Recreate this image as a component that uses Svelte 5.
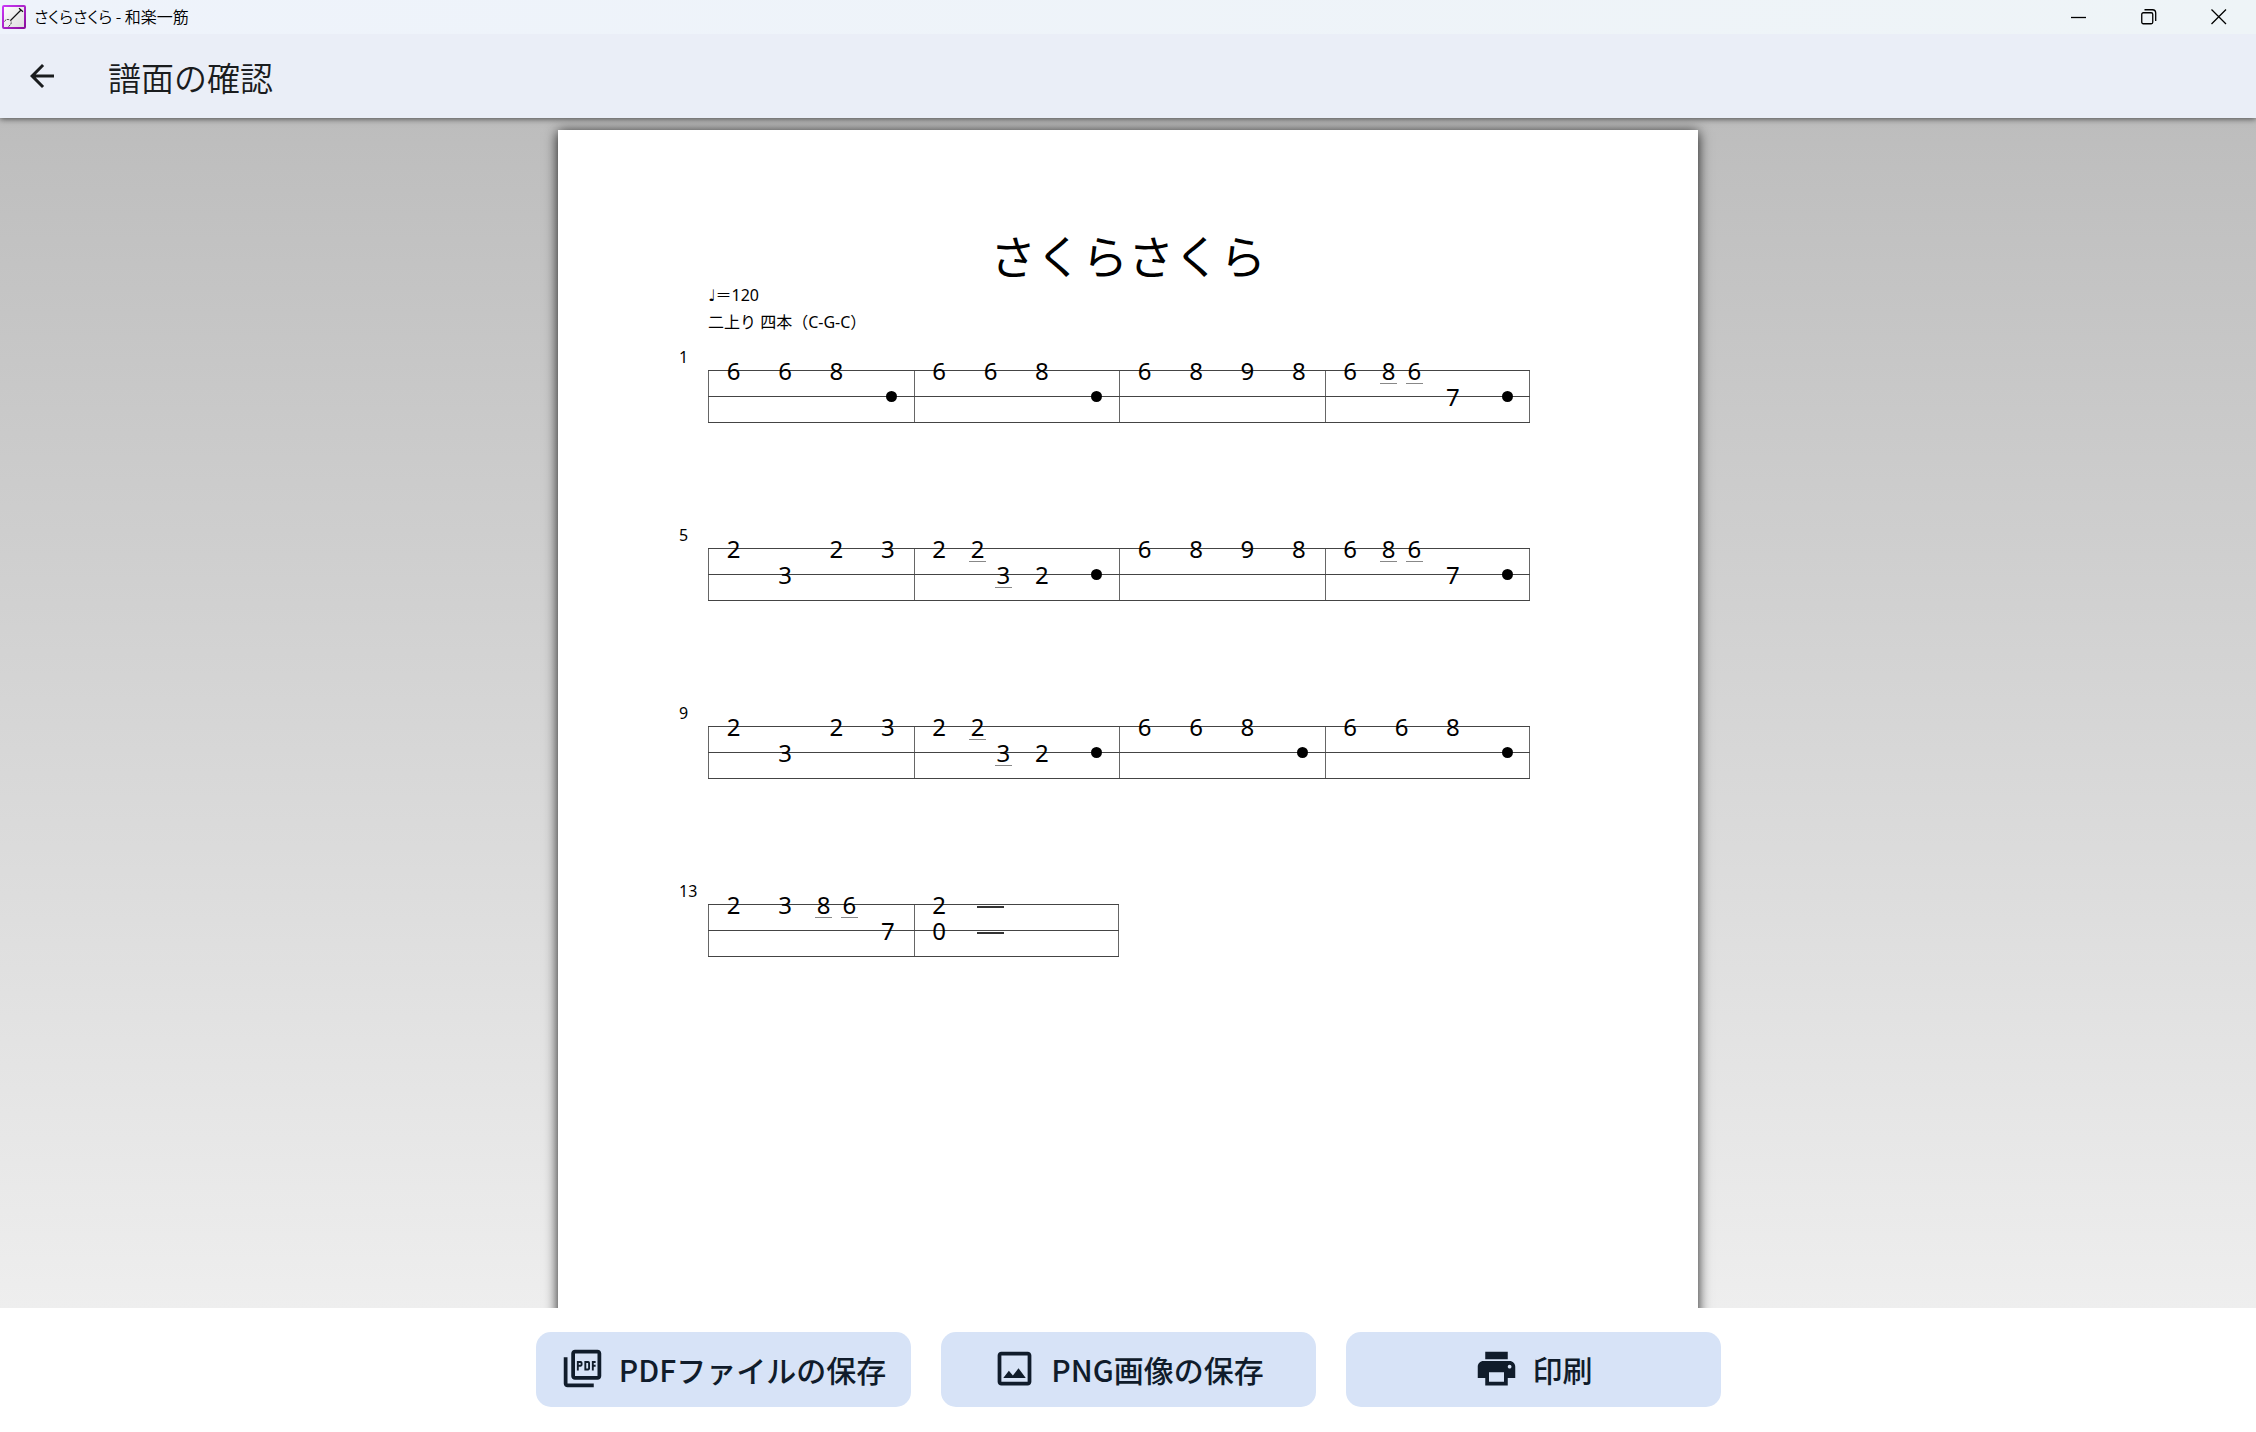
<script lang="ts">
  type Note = { at: number; len: number; string: number; mark: string };
  type System = { number: number; measures: Note[][] };

  // "at" and "len" count eighth notes, "string" is the line from the top.
  // Marks: a digit is a fret, "." is a rest, "-" holds the previous note.
  function parse(source: string): Note[] {
    let at = 0;
    const notes: Note[] = [];
    for (const token of source.split(' ')) {
      const short = token.endsWith('_');
      const len = short ? 1 : 2;
      for (const part of token.replace('_', '').split('+')) {
        notes.push({ at, len, string: Number(part[1]), mark: part[0] });
      }
      at += len;
    }
    return notes;
  }

  const rise = parse('61 61 81 .2');
  const peak = parse('61 81 91 81');
  const fall = parse('61 81_ 61_ 72 .2');
  const answer = parse('21 32 21 31');
  const turn = parse('21 21_ 32_ 22 .2');

  const systems: System[] = [
    { number: 1, measures: [rise, rise, peak, fall] },
    { number: 5, measures: [answer, turn, peak, fall] },
    { number: 9, measures: [answer, turn, rise, rise] },
    { number: 13, measures: [parse('21 31 81_ 61_ 72'), parse('21+02 -1+-2')] }
  ];
</script>

<div class="window">
  <header class="title-bar">
    <svg class="app-logo" viewBox="0 0 24 24" aria-hidden="true">
      <defs>
        <linearGradient id="logo-edge" x1="0" y1="0" x2="1" y2="1">
          <stop offset="0" stop-color="#c936f5" />
          <stop offset="1" stop-color="#8a0f9c" />
        </linearGradient>
        <linearGradient id="logo-face" x1="0" y1="0" x2="1" y2="1">
          <stop offset="0" stop-color="#ffffff" />
          <stop offset="1" stop-color="#dcdcdc" />
        </linearGradient>
      </defs>
      <rect x="1" y="1" width="22" height="22" rx="1" fill="url(#logo-face)" stroke="url(#logo-edge)" stroke-width="2" />
      <path d="M8.500 15.500 19 5M17 3.200l4 3.600" fill="none" stroke="#111" stroke-width="1.200" />
      <path d="M2.500 16.500c1-2.500 4.500-2.500 6-1 1.500 2 .5 4.500-2 6" fill="none" stroke="#333" stroke-width="1" stroke-dasharray="2 1" />
    </svg>
    <span class="window-title">さくらさくら - 和楽一筋</span>
    <div class="window-controls">
      <button type="button" aria-label="最小化">
        <svg viewBox="0 0 16 16"><path d="M0 8.500h15" /></svg>
      </button>
      <button type="button" aria-label="元に戻す">
        <svg viewBox="0 0 16 16">
          <rect x="0.750" y="3.750" width="11" height="11" rx="1.500" />
          <path d="M3.500 0.750h8a3.200 3.200 0 0 1 3.200 3.200v8" />
        </svg>
      </button>
      <button type="button" aria-label="閉じる">
        <svg viewBox="0 0 16 16"><path d="M0.500 0.500l14.500 14.500M15 0.500L0.500 15" /></svg>
      </button>
    </div>
  </header>

  <div class="app-bar">
    <button class="back" type="button" aria-label="戻る">
      <svg viewBox="0 0 24 24"><path d="M20 11H7.830l5.590-5.590L12 4l-8 8 8 8 1.410-1.410L7.830 13H20v-2z" /></svg>
    </button>
    <h1>譜面の確認</h1>
  </div>

  <main class="viewer">
    <article class="sheet">
      <h2>さくらさくら</h2>
      <p><span class="quarter">♩</span>＝120</p>
      <p>二上り 四本（C-G-C）</p>

      <div class="score">
        {#each systems as system}
          <section class="system">
            <span class="measure-number">{system.number}</span>
            {#each system.measures as measure}
              <div class="measure">
                {#each measure as note}
                  <span
                    class="note"
                    class:short={note.len === 1}
                    class:rest={note.mark === '.'}
                    class:hold={note.mark === '-'}
                    style="grid-column: {note.at + 1} / span {note.len}; grid-row: {note.string}"
                  >
                    {#if note.mark !== '.' && note.mark !== '-'}
                      <span class="fret">{note.mark}</span>
                    {/if}
                  </span>
                {/each}
              </div>
            {/each}
          </section>
        {/each}
      </div>
    </article>
  </main>

  <footer class="actions">
    <button type="button">
      <svg viewBox="0 0 24 24" aria-hidden="true">
        <path d="M20 2H8c-1.100 0-2 .9-2 2v12c0 1.100.9 2 2 2h12c1.100 0 2-.9 2-2V4c0-1.100-.9-2-2-2zm0 14H8V4h12v12zM4 6H2v14c0 1.100.9 2 2 2h14v-2H4V6zm12 6V9c0-.55-.45-1-1-1h-2v5h2c.55 0 1-.45 1-1zm-2-3h1v3h-1V9zm4 2h1v-1h-1V9h1V8h-2v5h1zm-8 0h1c.55 0 1-.45 1-1V9c0-.55-.45-1-1-1H9v5h1v-2zm0-2h1v1h-1V9z" />
      </svg>
      PDFファイルの保存
    </button>
    <button type="button">
      <svg viewBox="0 0 24 24" aria-hidden="true">
        <path d="M19 5v14H5V5h14m0-2H5c-1.100 0-2 .9-2 2v14c0 1.100.9 2 2 2h14c1.100 0 2-.9 2-2V5c0-1.100-.9-2-2-2zM14.140 11.860l-3 3.870L9 13.140 6 17h12l-3.860-5.140z" />
      </svg>
      PNG画像の保存
    </button>
    <button type="button">
      <svg viewBox="0 0 24 24" aria-hidden="true">
        <path d="M19 8H5c-1.660 0-3 1.340-3 3v6h4v4h12v-4h4v-6c0-1.660-1.340-3-3-3zm-3 11H8v-5h8v5zm3-7c-.55 0-1-.45-1-1s.45-1 1-1 1 .45 1 1-.45 1-1 1zm-1-9H6v4h12V3z" />
      </svg>
      印刷
    </button>
  </footer>
</div>

<style>
  :global(body) {
    margin: 0;
  }

  .window {
    display: flex;
    flex-direction: column;
    height: 100vh;
    background: #fff;
    color: #1a1c1e;
    font-family: "Noto Sans CJK JP", "Noto Sans", sans-serif;
  }

  button {
    border: none;
    font: inherit;
    color: inherit;
    cursor: pointer;
  }

  h1,
  h2,
  p {
    margin: 0;
    font-weight: 400;
  }

  .title-bar {
    position: relative;
    z-index: 2;
    display: flex;
    align-items: center;
    gap: 8px;
    height: 34px;
    padding: 0 2px;
    background: linear-gradient(90deg, #eef3fb, #eef4f7);
    color: #000;
  }

  .app-logo {
    width: 24px;
    height: 24px;
  }

  .window-title {
    padding-bottom: 2px;
    font-size: 16px;
    font-weight: 350;
    line-height: 22px;
    font-feature-settings: "palt";
  }

  .window-controls {
    display: flex;
    align-self: stretch;
    margin-left: auto;
  }

  .window-controls button {
    display: flex;
    align-items: center;
    justify-content: center;
    width: 70px;
    padding: 0;
    background: none;
  }

  .window-controls svg {
    width: 16px;
    height: 16px;
    fill: none;
    stroke: #000;
    stroke-width: 1.3;
  }

  .app-bar {
    position: relative;
    z-index: 1;
    display: flex;
    align-items: center;
    gap: 24px;
    height: 84px;
    background: #eaeef7;
    box-shadow: 0 1px 6px rgba(0, 0, 0, 0.6);
  }

  .back {
    display: flex;
    align-items: center;
    justify-content: center;
    width: 84px;
    height: 84px;
    padding: 0;
    background: none;
  }

  .back svg {
    width: 36px;
    height: 36px;
    fill: currentColor;
  }

  h1 {
    padding-top: 2px;
    font-size: 33px;
    font-weight: 350;
    line-height: 48px;
  }

  .viewer {
    flex: 1;
    min-height: 0;
    padding-top: 12px;
    overflow: hidden;
    background: linear-gradient(#bdbdbd, #eee);
  }

  .sheet {
    box-sizing: border-box;
    width: min(1140px, 100%);
    aspect-ratio: 210 / 297;
    margin: 0 auto;
    padding: 96px 168px 0 120px;
    background: #fff;
    box-shadow: 0 2px 12px rgba(0, 0, 0, 0.9);
    color: #000;
    font-family: "Noto Sans", "Noto Sans CJK JP", sans-serif;
  }

  .sheet h2 {
    margin: 0 -18px 0 30px;
    font-family: "Noto Sans CJK JP", sans-serif;
    font-size: 46px;
    line-height: 56px;
    text-align: center;
  }

  .sheet p {
    padding-left: 30px;
    font-size: 16px;
    line-height: 26px;
  }

  .quarter {
    font-family: "DejaVu Sans", sans-serif;
  }

  .score {
    display: flex;
    flex-direction: column;
    gap: 100px;
    margin-top: 22px;
  }

  .system {
    display: grid;
    grid-template-columns: 30px repeat(4, 1fr);
  }

  .measure-number {
    margin-top: -12px;
    padding-left: 1px;
    font-size: 16px;
    line-height: 24px;
  }

  /* Three strings and a bar line, each string through the middle of its row. */
  .measure {
    display: grid;
    grid-template-columns: repeat(8, 1fr);
    grid-template-rows: repeat(3, 26px);
    background:
      linear-gradient(#444, #444) 0 13px / 100% 1px no-repeat,
      linear-gradient(#444, #444) 0 39px / 100% 1px no-repeat,
      linear-gradient(#444, #444) 0 65px / 100% 1px no-repeat,
      linear-gradient(#666, #666) 0 13px / 1px 52px no-repeat;
  }

  .measure:last-child {
    background:
      linear-gradient(#444, #444) 0 13px / 100% 1px no-repeat,
      linear-gradient(#444, #444) 0 39px / 100% 1px no-repeat,
      linear-gradient(#444, #444) 0 65px / 100% 1px no-repeat,
      linear-gradient(#666, #666) 0 13px / 1px 52px no-repeat,
      linear-gradient(#666, #666) 100% 13px / 1px 52px no-repeat;
  }

  .note {
    display: flex;
    align-items: center;
    justify-content: center;
    font-size: 24px;
    line-height: 24px;
  }

  .fret {
    padding-top: 2px;
  }

  .short .fret {
    width: 17px;
    box-shadow: 0 1px #888;
    text-align: center;
  }

  .rest::before {
    content: "";
    width: 11px;
    height: 11px;
    margin-left: 7px;
    border-radius: 50%;
    background: #000;
  }

  .hold::before {
    content: "";
    width: 27px;
    height: 2px;
    margin-top: 6px;
    background: #333;
  }

  .actions {
    display: flex;
    justify-content: center;
    gap: 30px;
    padding: 24px 24px 25px;
  }

  .actions button {
    display: flex;
    align-items: center;
    justify-content: center;
    gap: 14px;
    width: 375px;
    height: 75px;
    padding: 0 0 2px;
    border-radius: 15px;
    background: #d7e3f7;
    color: #101c2b;
    font-size: 30px;
    font-weight: 500;
    line-height: 40px;
  }

  .actions svg {
    width: 45px;
    height: 45px;
    fill: currentColor;
  }
</style>
